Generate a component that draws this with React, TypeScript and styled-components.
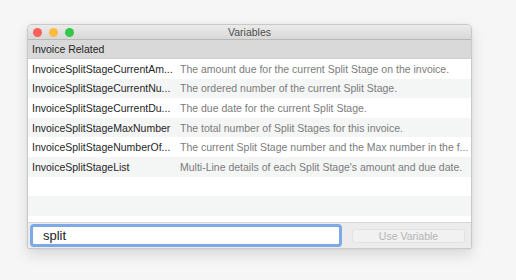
import { FC } from 'react'
import styled, { createGlobalStyle } from 'styled-components'

const GlobalStyle = createGlobalStyle`
  html, body {
    margin: 0;
    padding: 0;
    background: #f6f6f6;
    font-family: 'Liberation Sans', Arial, sans-serif;
  }
`

const Page = styled.div`
  width: 516px;
  height: 280px;
  padding: 24px 0 0 27px;
  box-sizing: border-box;
`

const Window = styled.div`
  width: 445px;
  height: 225px;
  display: flex;
  flex-direction: column;
  background: #fff;
  border: 1px solid #c9c9c9;
  border-radius: 5px 5px 2px 2px;
  box-sizing: border-box;
  overflow: hidden;
  box-shadow: 0 6px 14px rgba(0, 0, 0, 0.12), 0 0 2px rgba(0, 0, 0, 0.08);
`

const TitleBar = styled.div`
  height: 14px;
  flex-shrink: 0;
  display: grid;
  grid-template-columns: 1fr auto 1fr;
  align-items: center;
  background: linear-gradient(#ebebeb, #d8d8d8);
  border-bottom: 1px solid #b9b9b9;
`

const Lights = styled.div`
  display: flex;
  gap: 7px;
  padding-left: 5px;
`

const Light = styled.span<{ $color: string }>`
  width: 9px;
  height: 9px;
  border-radius: 50%;
  background: ${({ $color }) => $color};
`

const Title = styled.div`
  font-size: 10.5px;
  color: #4d4d4d;
`

const List = styled.div`
  flex: 1;
  overflow: hidden;
  display: flex;
  flex-direction: column;
`

const GroupHeader = styled.div`
  height: 18px;
  flex-shrink: 0;
  display: flex;
  align-items: center;
  padding-left: 4px;
  background: #d9d9d9;
  border-bottom: 1px solid #cfcfcf;
  font-size: 10.5px;
  color: #262626;
`

const Row = styled.div<{ $striped: boolean }>`
  height: 19.6px;
  flex-shrink: 0;
  display: grid;
  grid-template-columns: 148px 1fr;
  align-items: center;
  font-size: 10.5px;
  background: ${({ $striped }) => ($striped ? '#f4f5f5' : '#fff')};
`

const NameCell = styled.div`
  padding-left: 4px;
  color: #262626;
  white-space: nowrap;
`

const DescCell = styled.div`
  padding: 0 4px;
  color: #7b7b7b;
  white-space: nowrap;
`

const BottomBar = styled.div`
  height: 26px;
  flex-shrink: 0;
  display: flex;
  align-items: center;
  gap: 10px;
  padding: 0 6px 0 2px;
  background: #ececec;
  border-top: 1px solid #d6d6d6;
  box-sizing: border-box;
`

const SearchField = styled.input`
  width: 312px;
  height: 23px;
  box-sizing: border-box;
  border: 3px solid #7da9e6;
  border-radius: 4px;
  padding: 0 10px;
  font-family: inherit;
  font-size: 13px;
  color: #222;
  background: #fff;
  outline: none;
`

const UseButton = styled.button`
  flex: 1;
  height: 14px;
  padding: 0;
  border: 1px solid #e2e2e2;
  border-radius: 3px;
  background: #f1f1f1;
  font-family: inherit;
  font-size: 10.5px;
  color: #b5b5b5;
`

interface IVariable {
  name: string
  description: string
}

// names and descriptions as the table shows them, already shortened to the column
const variables: IVariable[] = [
  { name: 'InvoiceSplitStageCurrentAm...', description: 'The amount due for the current Split Stage on the invoice.' },
  { name: 'InvoiceSplitStageCurrentNu...', description: 'The ordered number of the current Split Stage.' },
  { name: 'InvoiceSplitStageCurrentDu...', description: 'The due date for the current Split Stage.' },
  { name: 'InvoiceSplitStageMaxNumber', description: 'The total number of Split Stages for this invoice.' },
  { name: 'InvoiceSplitStageNumberOf...', description: 'The current Split Stage number and the Max number in the f...' },
  { name: 'InvoiceSplitStageList', description: "Multi-Line details of each Split Stage's amount and due date." },
]

const App: FC = () => {
  const emptyRows = 3
  return (
    <>
      <GlobalStyle />
      <Page>
        <Window>
          <TitleBar>
            <Lights>
              <Light $color="#fc605b" />
              <Light $color="#fdbc40" />
              <Light $color="#34c84a" />
            </Lights>
            <Title>Variables</Title>
            <div />
          </TitleBar>
          <List>
            <GroupHeader>Invoice Related</GroupHeader>
            {variables.map((v, i) => (
              <Row key={v.name} $striped={i % 2 === 1}>
                <NameCell>{v.name}</NameCell>
                <DescCell>{v.description}</DescCell>
              </Row>
            ))}
            {Array.from({ length: emptyRows }).map((_, i) => (
              <Row key={`empty-${i}`} $striped={(variables.length + i) % 2 === 1} />
            ))}
          </List>
          <BottomBar>
            <SearchField defaultValue="split" />
            <UseButton>Use Variable</UseButton>
          </BottomBar>
        </Window>
      </Page>
    </>
  )
}

export default App
